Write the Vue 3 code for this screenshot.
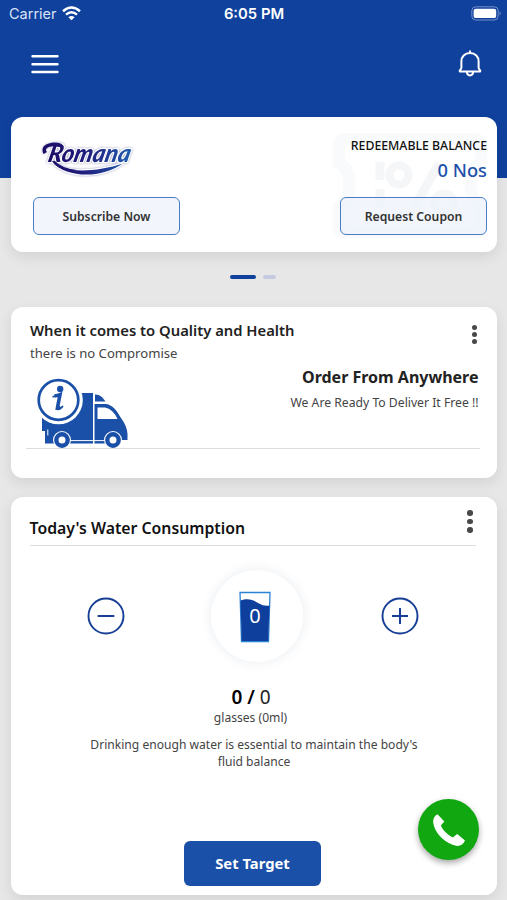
<template>
  <div class="screen">
    <header class="top">
      <div class="status-bar">
        <div class="carrier">
          <span>Carrier</span>
          <svg width="19" height="15" viewBox="0 0 19 15">
            <g fill="none" stroke="#fff" stroke-width="2.5">
              <path d="M1 5.2Q9.5 -2.2 18 5.2" />
              <path d="M4 8.6Q9.5 3.9 15 8.6" />
            </g>
            <path d="M6.4 11.2Q9.5 8.6 12.6 11.2L9.5 14.3Z" fill="#fff" />
          </svg>
        </div>
        <span class="time">6:05 PM</span>
        <svg class="battery" width="31" height="15" viewBox="0 0 31 15">
          <rect x="0.8" y="0.8" width="26.4" height="13.2" rx="4" fill="none" stroke="#fff" stroke-opacity="0.42" />
          <rect x="2.6" y="2.7" width="22.6" height="9.4" rx="2.2" fill="#fff" />
          <path d="M28.6 5.3Q30.6 7.4 28.6 9.5Z" fill="#fff" fill-opacity="0.5" />
        </svg>
      </div>
      <div class="nav">
        <button class="icon-btn" aria-label="Menu">
          <svg width="28" height="20" viewBox="0 0 28 20" stroke="#fff" stroke-width="2.4" stroke-linecap="round">
            <path d="M1.5 2.2H26.5M1.5 10.2H26.5M1.5 18H26.5" />
          </svg>
        </button>
        <button class="icon-btn" aria-label="Notifications">
          <svg width="24" height="28" viewBox="0 0 24 28" fill="none" stroke="#fff" stroke-width="2" stroke-linecap="round" stroke-linejoin="round">
            <path d="M12 1.2V3" />
            <path d="M12 3C6.600 3 3.400 6.800 3.400 11.200V17.800Q3.400 19 2.200 19.800Q1.300 20.800 2 21.600H22Q22.700 20.800 21.800 19.800Q20.600 19 20.600 17.800V11.200C20.600 6.800 17.400 3 12 3Z" />
            <path d="M8.8 22.2Q9.2 25.400 12 25.400T15.200 22.200" />
          </svg>
        </button>
      </div>
    </header>

    <section class="card balance-card">
      <svg class="coupon-mark" width="154" height="110" viewBox="0 0 154 110">
        <path d="M13 8H141Q148 8 148 14V32C134 37 134 69 148 76V96Q148 102 141 102H13Q6 102 6 96V76C20 69 20 37 6 32V14Q6 8 13 8Z" fill="none" stroke="#f8fafb" stroke-width="12" />
        <g fill="none" stroke="#f4f6f8">
          <path d="M47 31V49M47 58V76" stroke-width="9" />
          <path d="M106 32L81 77" stroke-width="9" />
          <circle cx="66" cy="44" r="9.5" stroke-width="8" />
          <circle cx="111" cy="72" r="9.5" stroke-width="8" />
        </g>
      </svg>
      <div class="balance-row">
        <svg class="logo" width="116" height="60" viewBox="0 0 116 60">
          <defs>
            <linearGradient id="brand" gradientUnits="userSpaceOnUse" x1="5" y1="0" x2="98" y2="0">
              <stop offset="0" stop-color="#1b0a63" />
              <stop offset="0.5" stop-color="#20207f" />
              <stop offset="1" stop-color="#2064b5" />
            </linearGradient>
          </defs>
          <g class="logo-outline">
            <path d="M17 34C30 46 62 44 88 35.500C66 51 32 50 17 34Z" fill="url(#brand)" stroke="#fff" stroke-width="2.500" paint-order="stroke" />
            <text class="logo-text" x="11" y="34.500" textLength="82" lengthAdjust="spacingAndGlyphs">Romana</text>
            <path d="M8.500 26Q5 18 14 15.500Q20 13.500 27 16L25 19Q15 17 11.500 20.500Q10 22.500 12 24Z" fill="url(#brand)" />
            <path d="M20 33Q26 40 42 42L34 43Q21 40 17 33Z" fill="url(#brand)" />
          </g>
        </svg>
        <div class="balance">
          <div class="balance-label">REDEEMABLE BALANCE</div>
          <div class="balance-value">{{ balance }} Nos</div>
        </div>
      </div>
      <div class="actions">
        <button class="outline-btn">Subscribe Now</button>
        <button class="outline-btn">Request Coupon</button>
      </div>
    </section>

    <div class="pager">
      <span class="dot active"></span>
      <span class="dot"></span>
    </div>

    <section class="card order-card">
      <div class="order-head">
        <div>
          <h2>When it comes to Quality and Health</h2>
          <p class="sub">there is no Compromise</p>
        </div>
        <span class="kebab"><i v-for="n in 3" :key="n"></i></span>
      </div>
      <div class="order-body">
        <svg class="truck" width="92" height="71" viewBox="0 0 92 71">
          <path d="M5 40H34V16H56V66.500H8V54H5Z" fill="#1b50a8" />
          <path d="M58 17.500Q64 17 68.500 24.500H58Z" fill="#1b50a8" />
          <path d="M57.500 27H69C76 28 80 34 84 41Q90 49 90.500 57V63H57.500Z" fill="#1b50a8" />
          <path d="M57.500 63H75V66.500H57.500Z" fill="#1b50a8" />
          <path d="M60.500 30.500H68Q76 32 80.500 42H60.500Z" fill="#fff" />
          <path d="M7.500 54V62M10.800 52.500V58.500M33 63.600H68" fill="none" stroke="#fff" stroke-width="1" />
          <circle cx="21.500" cy="23" r="24.300" fill="#fff" />
          <circle cx="21.500" cy="23" r="19.800" fill="#fff" stroke="#1b50a8" stroke-width="2.700" />
          <circle cx="23.200" cy="12" r="3.200" fill="#1b50a8" />
          <path d="M17.500 19Q21 18.500 23 17.700L20.500 30.500Q20.300 32.500 23.500 30" fill="none" stroke="#1b50a8" stroke-width="3.600" />
          <path d="M15.500 20L22 17.500M18.500 32Q23 33 26 29" fill="none" stroke="#1b50a8" stroke-width="1.800" />
          <g v-for="x in [25, 76]" :key="x">
            <circle :cx="x" cy="63" r="9" fill="#fff" />
            <circle :cx="x" cy="63" r="5.700" fill="#fff" stroke="#1b50a8" stroke-width="4.400" />
          </g>
        </svg>
        <div class="order-text">
          <h3>Order From Anywhere</h3>
          <p>We Are Ready To Deliver It Free !!</p>
        </div>
      </div>
    </section>

    <section class="card water-card">
      <div class="water-head">
        <h2>Today's Water Consumption</h2>
        <span class="kebab large"><i v-for="n in 3" :key="n"></i></span>
      </div>
      <div class="counter">
        <button class="icon-btn" aria-label="Remove glass" @click="removeGlass">
          <svg width="38" height="38" viewBox="0 0 38 38" fill="none" stroke="#173f96" stroke-width="1.900">
            <circle cx="19" cy="19" r="17.500" />
            <path d="M11.500 19H26.500" stroke-width="2.200" stroke-linecap="round" />
          </svg>
        </button>
        <div class="glass-circle">
          <svg width="34" height="52" viewBox="0 0 34 52">
            <path d="M2 1.500H32L30.500 50.500H3.500Z" fill="#fff" stroke="#2b83d4" stroke-width="1.300" />
            <path d="M2.500 9.500C11 6 17 10 21 12.500Q26 15.500 31.500 14.500L30.200 50H3.700Z" fill="#0e3f9c" />
            <text class="glass-count" x="17" y="32" text-anchor="middle">{{ glasses }}</text>
          </svg>
        </div>
        <button class="icon-btn" aria-label="Add glass" @click="glasses++">
          <svg width="38" height="38" viewBox="0 0 38 38" fill="none" stroke="#173f96" stroke-width="1.900">
            <circle cx="19" cy="19" r="17.500" />
            <path d="M11 19H27M19 11V27" stroke-width="2" />
          </svg>
        </button>
      </div>
      <div class="tally"><b>{{ glasses }} /</b> {{ target }}</div>
      <div class="unit">glasses ({{ glasses * 250 }}ml)</div>
      <p class="hint">Drinking enough water is essential to maintain the body's fluid balance</p>
      <button class="target-btn">Set Target</button>
    </section>

    <button class="call-btn" aria-label="Call">
      <svg width="34" height="34" viewBox="0 0 34 34">
        <path d="M5.500 1.200L12.300 8.400L8.800 12.600Q12 20 20.800 24.600L25.200 20.900L33 27.600C31 32.500 26.500 34.200 20.500 31.800C10.500 27.800 2.500 19 1.200 9.500Q.8 3.500 5.500 1.200Z" fill="#fff" />
      </svg>
    </button>
  </div>
</template>

<script setup>
import { ref } from "vue";

const balance = ref(0);
const glasses = ref(0);
const target = ref(0);

const removeGlass = () => {
  if (glasses.value > 0) glasses.value--;
};
</script>

<style>
body {
  margin: 0;
  overflow: hidden;
}
</style>

<style scoped>
* {
  box-sizing: border-box;
}

.screen {
  position: relative;
  height: 900px;
  padding: 0 10px 0 11px;
  background: linear-gradient(#10419d 178px, #e7e7e7 178px);
  font-family: "Noto Sans", "Open Sans", sans-serif;
  color: #222;
}

h2,
h3,
p {
  margin: 0;
}

button {
  padding: 0;
  border: none;
  background: none;
  font-family: inherit;
}

svg {
  display: block;
}

.top {
  height: 117px;
}

.status-bar {
  display: grid;
  grid-template-columns: 1fr auto 1fr;
  align-items: center;
  height: 27px;
  margin: 0 -3px 0 -2px;
  font-family: Inter, Roboto, sans-serif;
  font-size: 14.5px;
  color: #fff;
}

.carrier {
  display: flex;
  align-items: center;
  gap: 5px;
  color: #d9e3f8;
}

.time {
  margin-right: 1px;
  font-size: 14.8px;
  font-weight: 600;
}

.battery {
  justify-self: end;
  margin-right: -2px;
}

.nav {
  display: flex;
  justify-content: space-between;
  align-items: center;
  height: 74px;
  padding: 0 15px 0 20px;
}

.card {
  background: #fff;
  border-radius: 12px;
  box-shadow: 0 5px 14px rgba(0, 0, 0, 0.09);
}

.balance-card {
  position: relative;
  height: 135px;
  padding: 20px 10px 0 22px;
}

.coupon-mark {
  position: absolute;
  right: 10px;
  top: 14px;
}

.balance-row {
  position: relative;
  display: flex;
  justify-content: space-between;
  height: 60px;
}

.logo {
  margin: -9px 0 0 2px;
}

.logo-outline {
  filter: drop-shadow(0 0 1px #9a9ec4);
}

.logo-text {
  font-family: Lato, "Liberation Sans", sans-serif;
  font-size: 25px;
  font-style: italic;
  font-weight: 900;
  fill: url(#brand);
  stroke: #fff;
  stroke-width: 2.5px;
  stroke-linejoin: round;
  paint-order: stroke;
  transform: translate(9px, 0) skewX(-13deg);
}

.balance {
  text-align: right;
}

.balance-label {
  font-size: 12.3px;
  line-height: 18px;
  font-weight: 500;
  color: #111;
}

.balance-value {
  font-size: 18.3px;
  line-height: 30px;
  font-weight: 500;
  color: #1d50a9;
}

.actions {
  position: relative;
  display: flex;
  justify-content: space-between;
}

.outline-btn {
  width: 147px;
  height: 38px;
  border: 1.5px solid #4a7cc5;
  border-radius: 6px;
  background: rgba(237, 243, 251, 0.75);
  font-size: 12.2px;
  font-weight: 600;
  color: #333;
}

.pager {
  display: flex;
  justify-content: center;
  align-items: center;
  gap: 7px;
  height: 50px;
  margin-bottom: 5px;
  padding-right: 3px;
}

.dot {
  width: 13px;
  height: 4px;
  border-radius: 2px;
  background: #c5cae2;
}

.dot.active {
  width: 26px;
  background: #10419d;
}

.order-card {
  height: 171px;
  padding: 11px 17px 0 15px;
}

.order-head {
  display: flex;
  justify-content: space-between;
  padding: 0 3px 0 4px;
}

h2 {
  font-size: 14.8px;
  line-height: 24px;
  font-weight: 600;
}

.sub {
  font-size: 13.1px;
  line-height: 22px;
  color: #444;
}

.kebab {
  display: flex;
  flex-direction: column;
  gap: 2px;
  padding-top: 7px;
}

.kebab i {
  width: 5px;
  height: 5px;
  border-radius: 50%;
  background: #484848;
}

.kebab.large {
  gap: 3px;
  padding-top: 0;
}

.kebab.large i {
  width: 5.5px;
  height: 5.5px;
}

.order-body {
  display: flex;
  justify-content: space-between;
  height: 85px;
  border-bottom: 1px solid #ddd;
}

.truck {
  margin: 13px 0 0 11px;
}

.order-text {
  padding-right: 1.5px;
  text-align: right;
}

h3 {
  font-size: 16px;
  line-height: 26px;
  font-weight: 700;
}

.order-text p {
  font-size: 12.2px;
  line-height: 26px;
  color: #444;
}

.water-card {
  display: flex;
  flex-direction: column;
  align-items: center;
  height: 398px;
  margin-top: 19px;
  padding: 13px 3px 0 0;
}

.water-head {
  display: flex;
  justify-content: space-between;
  width: 446px;
  height: 36px;
  padding-right: 3px;
  border-bottom: 1px solid #ddd;
}

.water-head h2 {
  padding-top: 6px;
  font-size: 15.8px;
  color: #111;
}

.counter {
  display: flex;
  justify-content: space-between;
  align-items: center;
  width: 332px;
  height: 92px;
  margin-top: 24px;
}

.glass-circle {
  display: grid;
  place-items: center;
  width: 92px;
  height: 92px;
  margin-left: 9px;
  padding: 1px 4px 0 0;
  border-radius: 50%;
  box-shadow: 0 0 10px 2px rgba(50, 80, 130, 0.08);
}

.glass-count {
  font-size: 20px;
  fill: #fff;
}

.tally {
  margin-top: 21px;
  padding-right: 3px;
  font-size: 19px;
  line-height: 28px;
}

.tally b {
  font-weight: 600;
  color: #000;
}

.unit {
  padding-right: 4px;
  font-size: 12.1px;
  line-height: 14px;
  color: #444;
}

.hint {
  width: 340px;
  margin: 12px -3px 0 0;
  font-size: 12.1px;
  line-height: 16.5px;
  text-align: center;
  color: #444;
}

.target-btn {
  width: 137px;
  height: 45px;
  margin-top: 71px;
  padding-bottom: 1px;
  border-radius: 6px;
  background: #1b50a8;
  font-size: 14.8px;
  font-weight: 700;
  color: #fff;
}

.call-btn {
  position: absolute;
  left: 418px;
  top: 799px;
  display: grid;
  place-items: center;
  width: 61px;
  height: 61px;
  border-radius: 50%;
  background: #11a711;
  box-shadow: 0 3px 6px rgba(0, 0, 0, 0.35);
}
</style>
